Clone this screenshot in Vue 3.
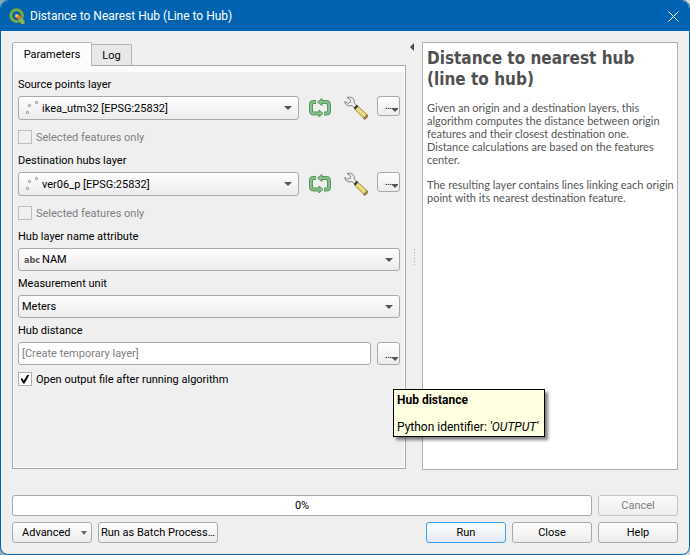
<script setup>
import { ref } from 'vue'

const layers = [
  { id: 'source', label: 'Source points layer', value: 'ikea_utm32 [EPSG:25832]' },
  { id: 'hubs', label: 'Destination hubs layer', value: 'ver06_p [EPSG:25832]' }
]
const openOutput = ref(true)
const output = ref('')
</script>

<template>
  <div class="window">
    <header class="titlebar">
      <svg class="logo" viewBox="0 0 16 16" aria-hidden="true">
        <circle cx="7.6" cy="7.6" r="5.8" fill="none" stroke="#7aa93c" stroke-width="3" />
        <path d="M8.4 8.4L11.400 11.400" stroke="#0063b1" stroke-width="5" />
        <path d="M9.500 9.500h2.700l3.400 3.600V16h-3L9.500 12.800z" fill="#8bb54a" />
        <path d="M6.4 6.4h3.400l1.600 1.800v3L9.600 11 6.400 9.400z" fill="#ee7913" />
        <path d="M6.400 6.400h2.400l-.4 2-2 .6z" fill="#f5d9a0" />
      </svg>
      <h1>Distance to Nearest Hub (Line to Hub)</h1>
      <button class="close" aria-label="Close window">
        <svg viewBox="0 0 11 11"><path d="M.5 .5L10.500 10.500M10.500 .5L.5 10.500" stroke="#fff" fill="none" /></svg>
      </button>
    </header>

    <main class="content">
      <section class="left">
        <div class="tabs" role="tablist">
          <button class="tab active" role="tab" aria-selected="true">Parameters</button>
          <button class="tab" role="tab" aria-selected="false">Log</button>
        </div>
        <div class="panel" role="tabpanel">
          <form class="form" @submit.prevent>
            <template v-for="layer in layers" :key="layer.id">
              <label class="caption" :for="layer.id">{{ layer.label }}</label>
              <div class="row layer-row">
                <div class="combo">
                  <select :id="layer.id" class="with-icon"><option>{{ layer.value }}</option></select>
                  <svg class="lead" width="16" height="16" viewBox="0 0 16 16" fill="none" stroke="#868686">
                    <circle cx="5.500" cy="5.500" r="1.100" /><circle cx="12.500" cy="2.500" r="1.100" /><circle cx="3.500" cy="12.500" r="1.100" />
                  </svg>
                  <svg class="arrow" width="8" height="4" viewBox="0 0 8 4"><path d="M0 0H8L4 4z" fill="#555" /></svg>
                </div>
                <button class="tool" type="button" aria-label="Iterate over this layer">
                  <svg width="24" height="24" viewBox="0 0 24 24" fill="none" stroke-linejoin="round">
                    <path d="M8 6H5.500Q3 6 3 8.500V14.500Q3 17.500 6 17.500H12" stroke="#55985b" stroke-width="4" />
                    <path d="M16 17.500H18Q21 17.500 21 15V9Q21 6 18 6H13" stroke="#55985b" stroke-width="4" />
                    <path d="M14 2.500V9.500L9.500 6zM11 14V21L15 17.500z" fill="#8abf8d" stroke="#55985b" />
                    <path d="M7.500 6H5.500Q3 6 3 8.500V14.500Q3 17.500 6 17.500H12" stroke="#8abf8d" stroke-width="2" />
                    <path d="M16.500 17.500H18Q21 17.500 21 15V9Q21 6 18 6H13" stroke="#8abf8d" stroke-width="2" />
                  </svg>
                </button>
                <button class="tool" type="button" aria-label="Advanced options">
                  <svg width="24" height="24" viewBox="0 0 24 24" stroke-linejoin="round">
                    <path d="M10.500 13L13.500 10L23 18.500Q24 21.500 20.500 23z" fill="#ead56f" stroke="#8c7a3c" stroke-width=".8" />
                    <path d="M19.500 22.600L23 18.800Q24.200 22.200 20.500 23.200z" fill="#a49668" stroke="#6b6040" stroke-width=".8" />
                    <path d="M13.500 12.500L20.500 19" stroke="#f7eba8" />
                    <path d="M3 1.500Q6.500 .3 9 2.500Q11 4.500 10.200 7L13 9.800L10.800 12L8 9.600Q4.500 10.800 2 8.500Q.5 7 .8 5.500L3.500 7.200L6.200 6.600L6.500 4z" fill="#eceeec" stroke="#77797a" stroke-width=".9" />
                    <path d="M10.500 12.700L13.500 9.500" stroke="#333" stroke-width="2.200" />
                  </svg>
                </button>
                <button class="more" type="button" aria-label="Browse">…<svg width="6" height="4" viewBox="0 0 6 4"><path d="M0 0H6V1L3 4L0 1z" fill="#555" /></svg></button>
              </div>
              <label class="check disabled"><input type="checkbox" disabled /><span>Selected features only</span></label>
            </template>

            <label class="caption" for="attribute">Hub layer name attribute</label>
            <div class="combo">
              <select id="attribute" class="with-icon"><option>NAM</option></select>
              <span class="lead abc">abc</span>
              <svg class="arrow" width="8" height="4" viewBox="0 0 8 4"><path d="M0 0H8L4 4z" fill="#555" /></svg>
            </div>

            <label class="caption" for="unit">Measurement unit</label>
            <div class="combo">
              <select id="unit"><option>Meters</option></select>
              <svg class="arrow" width="8" height="4" viewBox="0 0 8 4"><path d="M0 0H8L4 4z" fill="#555" /></svg>
            </div>

            <label class="caption" for="output">Hub distance</label>
            <div class="row">
              <input id="output" v-model="output" class="text" type="text" placeholder="[Create temporary layer]" />
              <button class="more large" type="button" aria-label="Output options">…<svg width="6" height="4" viewBox="0 0 6 4"><path d="M0 0H6V1L3 4L0 1z" fill="#555" /></svg></button>
            </div>
            <label class="check open-output"><input v-model="openOutput" type="checkbox" /><span>Open output file after running algorithm</span></label>
          </form>
        </div>
      </section>

      <div class="splitter">
        <button class="collapse" aria-label="Collapse help">
          <svg width="4" height="8" viewBox="0 0 4 8"><path d="M4 0V8L0 4z" fill="#4a4a4a" /></svg>
        </button>
        <span class="grip"></span>
      </div>

      <aside class="help">
        <h2>Distance to nearest hub (line to hub)</h2>
        <p>Given an origin and a destination layers, this algorithm computes the distance between origin features and their closest destination one.<br />Distance calculations are based on the features center.</p>
        <p>The resulting layer contains lines linking each origin point with its nearest destination feature.</p>
      </aside>
    </main>

    <footer class="footer">
      <div class="row">
        <div class="progress" role="progressbar" aria-label="Progress" aria-valuenow="0" aria-valuemin="0" aria-valuemax="100">0%</div>
        <button class="btn" disabled>Cancel</button>
      </div>
      <div class="row">
        <button class="btn advanced">Advanced<svg width="6" height="4" viewBox="0 0 6 4"><path d="M0 0H6L3 4z" fill="#666" /></svg></button>
        <button class="btn batch">Run as Batch Process…</button>
        <span class="spacer"></span>
        <button class="btn primary">Run</button>
        <button class="btn">Close</button>
        <button class="btn">Help</button>
      </div>
    </footer>

    <div class="tooltip" role="tooltip">
      <strong>Hub distance</strong>
      <p>Python identifier: <em>'OUTPUT'</em></p>
    </div>
  </div>
</template>

<style>
body {
  background: linear-gradient(to right, #86adb5, #d8d8cc);
}
</style>

<style scoped>
* {
  box-sizing: border-box;
}
.window {
  position: relative;
  display: flex;
  flex-direction: column;
  min-height: 100vh;
  overflow: hidden;
  border: 1px solid #0063b1;
  border-radius: 8px;
  background: #efefef;
  color: #000;
  font: 11px/13px Roboto, "Noto Sans", sans-serif;
}
button,
input,
select {
  margin: 0;
  font: inherit;
  color: inherit;
}
svg {
  display: block;
  flex: none;
}
.titlebar {
  display: flex;
  align-items: center;
  height: 30px;
  padding: 0 10px 0 8px;
  background: #0063b1;
  color: #fff;
}
.logo {
  width: 16px;
  height: 16px;
}
h1 {
  flex: 1;
  margin: 0 0 0 5px;
  font: 12px/16px Roboto, "Noto Sans", sans-serif;
}
.close {
  padding: 0;
  border: 0;
  background: none;
}
.close svg {
  width: 11px;
  height: 11px;
}
.content {
  display: grid;
  flex: 1;
  grid-template-columns: minmax(0, 394fr) 16px minmax(0, 256fr);
  padding: 11px 11px 0;
}
.left {
  display: flex;
  flex-direction: column;
  padding-bottom: 1px;
}
.tabs {
  display: flex;
  align-items: flex-end;
}
.tab {
  width: 40px;
  height: 21px;
  padding: 0;
  border: 1px solid #b4b4b4;
  border-bottom: 0;
  border-left: 0;
  border-radius: 0 2px 0 0;
  background: #e8e8e8;
}
.tab.active {
  z-index: 1;
  width: 80px;
  height: 24px;
  margin-bottom: -1px;
  border-left: 1px solid #a8a8a8;
  border-radius: 2px 2px 0 0;
  background: #fcfcfc;
}
.panel {
  flex: 1;
  padding: 6px 1px 1px;
  border: 1px solid #a8a8a8;
  background: #fbfbfb;
}
.form {
  display: flex;
  flex-direction: column;
  height: 100%;
  padding: 6px 4px 0;
  background: #efefef;
}
.caption {
  height: 18px;
  line-height: 14px;
}
.row {
  display: flex;
  gap: 6px;
}
.combo {
  display: grid;
  grid-template-columns: 22px 1fr 15px;
  align-items: center;
  height: 23px;
  margin-bottom: 6px;
}
.layer-row .combo {
  flex: 1;
  height: 24px;
  margin: 0;
}
.combo select {
  grid-area: 1 / 1 / 2 / 4;
  width: 100%;
  height: 100%;
  padding: 0 18px 0 3px;
  appearance: none;
  border: 1px solid #a9a9a9;
  border-radius: 3px;
  background: linear-gradient(#fefefe, #ececec);
}
.combo select.with-icon {
  padding-left: 23px;
}
.lead {
  grid-area: 1 / 1;
  justify-self: end;
  pointer-events: none;
}
.abc {
  color: #555;
  font: bold 9px/12px "DejaVu Sans Condensed", sans-serif;
}
.arrow {
  grid-area: 1 / 3;
  pointer-events: none;
}
.tool {
  display: grid;
  width: 30px;
  height: 24px;
  padding: 0;
  border: 0;
  background: none;
  place-items: center;
}
.more {
  display: flex;
  align-items: flex-end;
  justify-content: flex-end;
  width: 23px;
  height: 20px;
  padding: 0 1px 3px 0;
  border: 1px solid #a9a9a9;
  border-radius: 3px;
  background: linear-gradient(#fefefe, #ececec);
}
.more.large {
  height: 23px;
}
.check {
  display: flex;
  align-items: center;
  gap: 4px;
  height: 14px;
  margin: 10px 0;
}
.check.open-output {
  margin-top: 7px;
}
.check.disabled {
  color: #808080;
}
.check input {
  display: grid;
  width: 14px;
  height: 14px;
  appearance: none;
  border: 1px solid #b0b0b0;
  background: #fff;
  place-items: center;
}
.check.disabled input {
  border-color: #bebebe;
  background: #f0f0f0;
}
.check input:checked::before {
  width: 9px;
  height: 9px;
  background: #000;
  clip-path: polygon(0 50%, 18% 42%, 36% 68%, 80% 0, 100% 0, 46% 100%, 30% 100%);
  content: "";
}
.text {
  flex: 1;
  min-width: 0;
  height: 23px;
  padding: 0 3px;
  border: 1px solid #a9a9a9;
  border-radius: 3px;
  background: #fff;
}
.text::placeholder {
  color: #808080;
}
.splitter {
  display: flex;
  flex-direction: column;
  align-items: center;
  justify-content: space-between;
  padding: 1px 4px 204px 0;
}
.collapse {
  padding: 0;
  border: 0;
  background: none;
}
.grip {
  width: 1px;
  height: 17px;
  margin-left: 4px;
  background: repeating-linear-gradient(#aaa 0 1px, transparent 1px 3px);
}
.help {
  padding: 5px 0 5px 4px;
  border: 1px solid #b0b0b0;
  background: #fff;
  color: #555;
}
.help h2 {
  margin: 0 0 11px;
  color: #505050;
  font: bold 17px/21px "DejaVu Sans Condensed", sans-serif;
}
.help p {
  margin: 0 0 12px;
  font-family: Lato, "Noto Sans", sans-serif;
}
.footer {
  display: flex;
  flex-direction: column;
  gap: 6px;
  padding: 25px 11px 11px;
}
.progress {
  flex: 1;
  height: 21px;
  border: 1px solid #a9a9a9;
  border-radius: 3px;
  background: #fff;
  line-height: 20px;
  text-align: center;
}
.btn {
  width: 80px;
  height: 21px;
  padding: 0;
  border: 1px solid #a9a9a9;
  border-radius: 3px;
  background: linear-gradient(#fefefe, #ececec);
  white-space: nowrap;
}
.btn:disabled {
  border-color: #c4c4c4;
  background: linear-gradient(#fafafa, #eee);
  color: #808080;
}
.btn.primary {
  border-color: #3aa0f0;
  background: linear-gradient(#fefefe, #e2e8ef);
}
.advanced {
  display: flex;
  align-items: center;
  justify-content: space-between;
  padding: 0 4px 0 9px;
}
.batch {
  width: 120px;
}
.spacer {
  flex: 1;
}
.tooltip {
  position: absolute;
  top: 388px;
  left: 392px;
  padding: 3px 6px 2px 3px;
  border: 1px solid #000;
  background: #ffffe1;
  box-shadow: 3px 3px 3px rgba(0, 0, 0, 0.5);
  font: 12px/14px Roboto, "Noto Sans", sans-serif;
  white-space: nowrap;
}
.tooltip p {
  margin: 13px 0 0;
}
</style>
